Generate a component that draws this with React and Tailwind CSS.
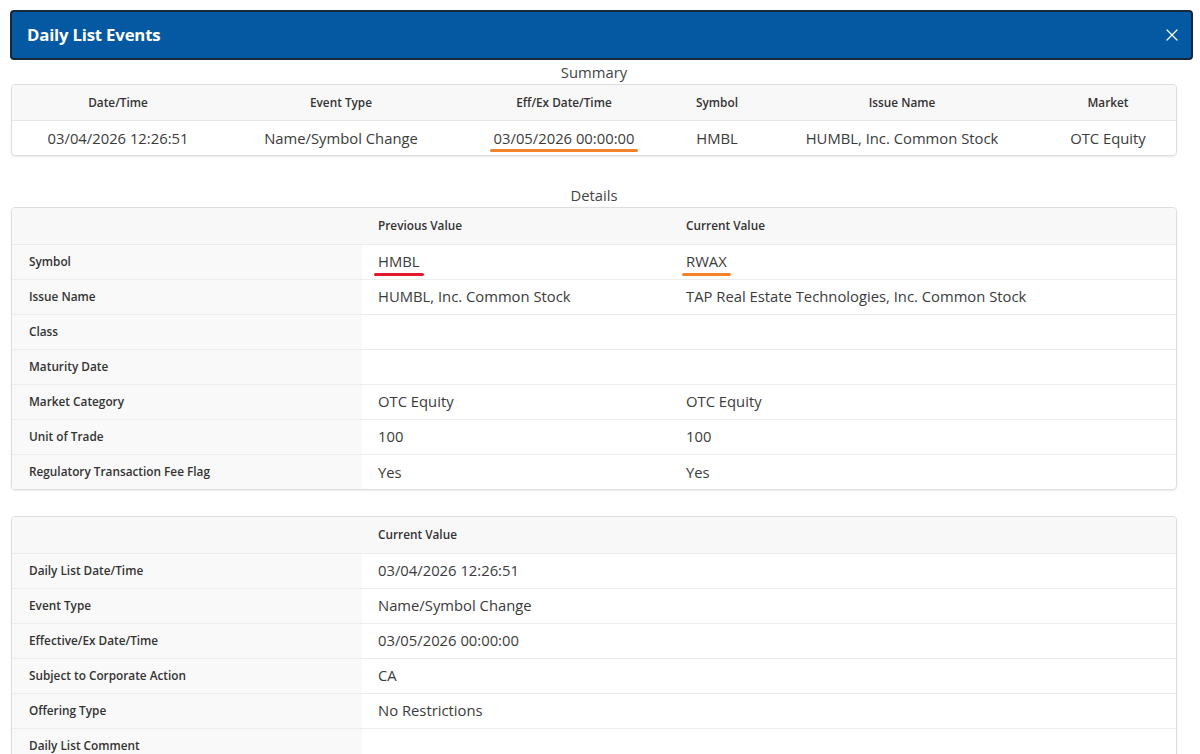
import { X } from 'lucide-react';

const summaryCols = [
    { label: 'Date/Time', value: '03/04/2026 12:26:51', w: 'w-[212px]' },
    { label: 'Event Type', value: 'Name/Symbol Change', w: 'w-[234px]' },
    { label: 'Eff/Ex Date/Time', value: '03/05/2026 00:00:00', w: 'w-[212px]', mark: 'orange' },
    { label: 'Symbol', value: 'HMBL', w: 'w-[94px]' },
    { label: 'Issue Name', value: 'HUMBL, Inc. Common Stock', w: 'w-[276px]' },
    { label: 'Market', value: 'OTC Equity', w: '' },
];

const details = [
    { label: 'Symbol', prev: 'HMBL', curr: 'RWAX', prevMark: 'red', currMark: 'orange' },
    { label: 'Issue Name', prev: 'HUMBL, Inc. Common Stock', curr: 'TAP Real Estate Technologies, Inc. Common Stock' },
    { label: 'Class', prev: '', curr: '' },
    { label: 'Maturity Date', prev: '', curr: '' },
    { label: 'Market Category', prev: 'OTC Equity', curr: 'OTC Equity' },
    { label: 'Unit of Trade', prev: '100', curr: '100' },
    { label: 'Regulatory Transaction Fee Flag', prev: 'Yes', curr: 'Yes' },
];

const general = [
    { label: 'Daily List Date/Time', curr: '03/04/2026 12:26:51' },
    { label: 'Event Type', curr: 'Name/Symbol Change' },
    { label: 'Effective/Ex Date/Time', curr: '03/05/2026 00:00:00' },
    { label: 'Subject to Corporate Action', curr: 'CA' },
    { label: 'Offering Type', curr: 'No Restrictions' },
    { label: 'Daily List Comment', curr: '' },
];

// coloured highlight bar under a value
const Marked = ({ text, mark }) => {
    if (!mark) return text;
    return (
        <span className="relative inline-block">
            {text}
            <span
                className={
                    'absolute -left-[4px] -right-[4px] -bottom-[3px] h-[3px] rounded-full ' +
                    (mark === 'red' ? 'bg-[#e3192e]' : 'bg-[#f4842b]')
                }
            />
        </span>
    );
};

const Card = ({ children }) => (
    <div className="border border-[#dedede] rounded-[4px] shadow-[0_1px_2px_rgba(0,0,0,0.08)] overflow-hidden">
        {children}
    </div>
);

const App = () => {
    return (
        <div className="w-[1200px] h-[754px] overflow-hidden bg-white text-[#3b3b3b]" style={{ fontFamily: '"Open Sans", "Noto Sans", sans-serif' }}>
            {/* Header */}
            <div className="mx-[10px] mt-[10px] mr-[7px] h-[50px] rounded-[4px] border-2 border-[#17283a] bg-[#0559a2] flex items-center justify-between pl-[15px] pr-[9px]">
                <h2 className="text-white text-[16.8px] font-bold tracking-[-0.2px]">Daily List Events</h2>
                <X size={20} strokeWidth={1.5} className="text-white" />
            </div>

            <div className="ml-[11px] mr-[23px] text-[14.8px]">
                {/* Summary */}
                <div className="text-center leading-[24px] text-[#444]">Summary</div>
                <Card>
                    <table className="w-full border-collapse">
                        <thead>
                            <tr className="bg-[#f8f8f8] h-[35px] border-b border-[#e6e6e6]">
                                {summaryCols.map((c) => (
                                    <th key={c.label} className={`${c.w} pt-[1px] text-[11.8px] font-semibold text-[#333] text-center`}>
                                        {c.label}
                                    </th>
                                ))}
                            </tr>
                        </thead>
                        <tbody>
                            <tr className="h-[35px]">
                                {summaryCols.map((c) => (
                                    <td key={c.label} className="text-center text-[#3b3b3b]">
                                        <Marked text={c.value} mark={c.mark} />
                                    </td>
                                ))}
                            </tr>
                        </tbody>
                    </table>
                </Card>

                {/* Details */}
                <div className="text-center leading-[24px] mt-[27px] text-[#444]">Details</div>
                <Card>
                    <table className="w-full border-collapse">
                        <thead>
                            <tr className="bg-[#f8f8f8] h-[36px] border-b border-[#ebebeb]">
                                <th className="w-[350px]" />
                                <th className="w-[308px] text-left pl-[16px] text-[11.8px] font-semibold text-[#333]">Previous Value</th>
                                <th className="text-left pl-[16px] text-[11.8px] font-semibold text-[#333]">Current Value</th>
                            </tr>
                        </thead>
                        <tbody>
                            {details.map((r, i) => (
                                <tr key={r.label} className={'h-[35px] ' + (i < details.length - 1 ? 'border-b border-[#ededed]' : '')}>
                                    <td className="bg-[#f9f9f9] pl-[17px] text-[11.8px] font-semibold text-[#333]">{r.label}</td>
                                    <td className="pl-[16px]">
                                        <Marked text={r.prev} mark={r.prevMark} />
                                    </td>
                                    <td className="pl-[16px]">
                                        <Marked text={r.curr} mark={r.currMark} />
                                    </td>
                                </tr>
                            ))}
                        </tbody>
                    </table>
                </Card>

                {/* Current values */}
                <div className="mt-[26px]">
                    <Card>
                        <table className="w-full border-collapse">
                            <thead>
                                <tr className="bg-[#f8f8f8] h-[36px] border-b border-[#ebebeb]">
                                    <th className="w-[350px]" />
                                    <th className="text-left pl-[16px] text-[11.8px] font-semibold text-[#333]">Current Value</th>
                                </tr>
                            </thead>
                            <tbody>
                                {general.map((r) => (
                                    <tr key={r.label} className="h-[35px] border-b border-[#ededed]">
                                        <td className="bg-[#f9f9f9] pl-[17px] text-[11.8px] font-semibold text-[#333]">{r.label}</td>
                                        <td className="pl-[16px]">{r.curr}</td>
                                    </tr>
                                ))}
                            </tbody>
                        </table>
                    </Card>
                </div>
            </div>
        </div>
    );
};

export default App;
